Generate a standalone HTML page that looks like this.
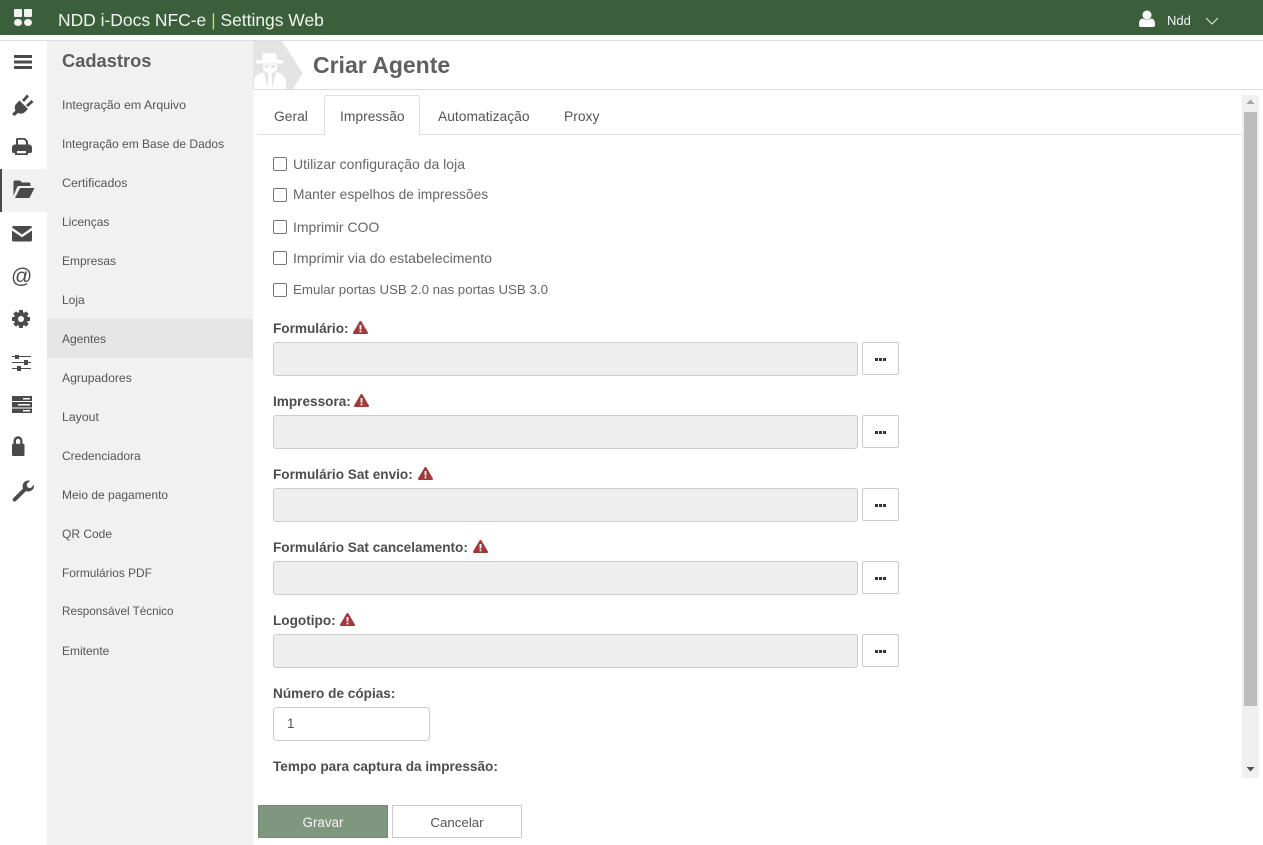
<!DOCTYPE html>
<html lang="pt">
<head>
<meta charset="utf-8">
<title>NDD i-Docs NFC-e | Settings Web</title>
<style>
html,body{margin:0;padding:0;width:1263px;height:845px;overflow:hidden;background:#fff;}
body{font-family:"Liberation Sans","DejaVu Sans",sans-serif;color:#555;position:relative;}
div,span,svg{position:absolute;box-sizing:border-box;}
.t{white-space:nowrap;}
.nav{left:62px;font-size:12px;color:#555;white-space:nowrap;line-height:16px;}
.chk{left:273px;width:14px;height:14px;border:1px solid #767676;border-radius:2px;background:#fff;}
.cl{left:293px;font-size:13.35px;color:#666;white-space:nowrap;line-height:18px;}
.lb{left:273px;font-size:13.6px;font-weight:bold;color:#4d4d4d;white-space:nowrap;line-height:18px;}
.in{left:273px;width:585px;height:34px;background:#eee;border:1px solid #ccc;border-radius:3px;}
.bt{left:862px;width:37px;height:33px;background:#fff;border:1px solid #ccc;border-radius:2px;}
.bt i{position:absolute;top:15px;width:3px;height:3px;background:#333;}
.tab{font-size:13.85px;color:#555;white-space:nowrap;line-height:18px;top:107px;}
.ic{fill:#4a4a4a;}
</style>
</head>
<body>
<div style="left:0;top:0;width:1263px;height:35px;background:#3b5f3b;"></div>
<svg style="left:14px;top:9px" width="18" height="18" viewBox="0 0 18 18" fill="#f2f2f2"><rect x="0" y="0" width="8" height="8" rx="1"/><rect x="10" y="0" width="8" height="8" rx="1"/><ellipse cx="4" cy="13.500" rx="4" ry="3.500"/><ellipse cx="14" cy="13.500" rx="4" ry="3.500"/></svg>
<div class="t" style="left:58px;top:9px;font-size:17.45px;line-height:22px;color:#f1f5f1;">NDD i-Docs NFC-e <span style="position:static;color:#e8c95a;">|</span> Settings Web</div>
<svg style="left:1139px;top:10px" width="16" height="18" viewBox="0 0 16 18" fill="#fff"><circle cx="8" cy="5" r="4.500"/><path d="M0 14c0-4 2-5.500 4-5.500 1 .8 2.500 1.200 4 1.200s3-.4 4-1.200c2 0 4 1.500 4 5.500v1.500c0 1-1 1.500-2 1.500H2c-1 0-2-.5-2-1.500z"/></svg>
<div class="t" style="left:1167px;top:13px;font-size:13px;line-height:16px;color:#f1f8f8;">Ndd</div>
<svg style="left:1205px;top:17px" width="14" height="9" viewBox="0 0 14 9" fill="none" stroke="#e6ece6" stroke-width="1"><path d="M1 1l6 6 6-6"/></svg>

<div style="left:0;top:40px;width:1263px;height:1px;background:#ddd;"></div>

<!-- left icon rail -->
<div style="left:0;top:169px;width:47px;height:43px;background:#f1f1f1;"></div>
<div style="left:0;top:169px;width:2px;height:43px;background:#4a4a4a;"></div>
<svg style="left:0;top:40px" width="47" height="480" viewBox="0 0 47 480">
<g class="ic">
<rect x="14" y="15" width="18" height="3" rx=".5"/><rect x="14" y="20.500" width="18" height="3" rx=".5"/><rect x="14" y="26" width="18" height="3" rx=".5"/>
<path d="M12 74l3.500-3.500c-1.500-3-.5-5.500 1-7l3-3 8.500 8.500-3 3c-1.500 1.500-4 2.300-7 1L14.500 76z"/><path d="M22 60l5-5.500 2 2-5 5.500zM26 65l5.500-5 2 2-5.500 5z"/>
<path d="M16 104.500V99.500c0-.8.500-1.500 1.500-1.500h7.500l3 3v3.500h1c1.500 0 3 1.200 3 3v4c0 .8-.5 1.500-1.500 1.500H28v2H15v-2h-1.500c-1 0-1.500-.7-1.500-1.500v-4c0-1.800 1.500-3 3-3zm2 0h8v-2.800l-2-1.900h-6zm-1 6.500v2.300h9V111z" fill-rule="evenodd"/>
<path d="M13.500 156V142c0-1 .5-1.500 1.500-1.500h5l2 2h7c1 0 1.500.5 1.500 1.500v2H19c-1 0-1.500.4-2 1.200z"/>
<path d="M15 158l4.500-9c.3-.6.8-1 1.500-1h13.500l-4.500 9c-.3.6-.8 1-1.500 1z"/>
<path d="M12 187.500c0-1 .8-1.500 1.500-1.500h17c.8 0 1.500.6 1.500 1.500l-10 7-10-7zM12 190.500l10 6.800 10-6.800V200c0 1-.7 1.500-1.500 1.500h-17c-.8 0-1.500-.5-1.500-1.500z"/>
</g>
<g fill="#4a4a4a" transform="translate(21 279)">
<circle r="7"/>
<rect x="-2" y="-9" width="4" height="18" rx=".6"/>
<rect x="-2" y="-9" width="4" height="18" rx=".6" transform="rotate(45)"/>
<rect x="-2" y="-9" width="4" height="18" rx=".6" transform="rotate(90)"/>
<rect x="-2" y="-9" width="4" height="18" rx=".6" transform="rotate(135)"/>
</g>
<circle cx="21" cy="279" r="3" fill="#fff"/>
<text x="11" y="243" font-family="Liberation Sans,sans-serif" font-size="21" fill="#4a4a4a">@</text>
<g fill="#4a4a4a">
<rect x="12" y="316" width="19" height="1"/><rect x="12" y="322" width="19" height="1"/><rect x="12" y="328" width="19" height="1"/>
<rect x="15" y="315" width="4" height="4"/><rect x="24" y="320" width="4" height="5"/><rect x="17" y="326" width="4" height="5"/>
<path d="M12 356h20v5H12zM12 362h20v5.500H12zM12 368.500h20v4.500H12z" />
</g>
<g fill="#fff"><rect x="23" y="358" width="7" height="1.500"/><rect x="18" y="364" width="12" height="1.500"/><rect x="23" y="370" width="7" height="1.500"/></g>
<g fill="#4a4a4a">
<path d="M12 405c0-.7.500-1.200 1.200-1.200h.3v-3a4.500 4.500 0 0 1 9 0v3h.8c.7 0 1.200.5 1.200 1.200v9.800c0 .7-.5 1.200-1.200 1.200H13.200c-.7 0-1.200-.5-1.200-1.200zm4-1.200h4.200v-3a2.100 2.100 0 0 0-4.200 0z" fill-rule="evenodd"/>
<path d="M13 458.500l10-10c-1-3 0-5.500 2-7 1.500-1 3.500-1.300 5-.8l-3.500 3.500 1 3 3 1 3.500-3.500c.3 2-.3 4-1.800 5.300-1.700 1.500-4 2-6.200 1l-10 10c-.8.800-2 .8-2.800 0-.7-.7-.7-1.800-.2-2.500z"/>
</g>
</svg>

<!-- submenu -->
<div style="left:47px;top:41px;width:206px;height:804px;background:#f1f1f1;"></div>
<div style="left:47px;top:319px;width:206px;height:39px;background:#e6e6e6;"></div>
<div class="t" style="left:62px;top:49px;font-size:18.3px;line-height:24px;font-weight:bold;color:#5c5c5c;">Cadastros</div>
<div class="nav" style="top:97px;font-size:12.4px">Integração em Arquivo</div>
<div class="nav" style="top:136px">Integração em Base de Dados</div>
<div class="nav" style="top:175px;font-size:12.4px">Certificados</div>
<div class="nav" style="top:214px">Licenças</div>
<div class="nav" style="top:253px">Empresas</div>
<div class="nav" style="top:292px">Loja</div>
<div class="nav" style="top:331px">Agentes</div>
<div class="nav" style="top:370px;font-size:12.2px">Agrupadores</div>
<div class="nav" style="top:409px;font-size:12.3px">Layout</div>
<div class="nav" style="top:448px">Credenciadora</div>
<div class="nav" style="top:487px">Meio de pagamento</div>
<div class="nav" style="top:526px">QR Code</div>
<div class="nav" style="top:565px;font-size:11.9px">Formulários PDF</div>
<div class="nav" style="top:604px;font-size:11.7px">Responsável Técnico</div>
<div class="nav" style="top:643px">Emitente</div>

<!-- page header -->
<svg style="left:253px;top:41px" width="52" height="48" viewBox="0 0 52 48">
<path d="M0 0H29L49.500 32 40 48H0z" fill="#e4e4e4"/>
<path d="M9 19l1-6c.2-1 1-1.500 2-1.200l4.500 1 4.500-1c1-.3 1.800.2 2 1.200l1 6h6v3.500H3V19z" fill="#fff"/>
<path d="M10 23.500h14V27c0 3-3 5-7 5s-7-2-7-5z" fill="#fff"/>
<path d="M11.500 24.500h4.500l-.5 2h-3zM18 24.500h4.500l-1 2h-3z" fill="#dcdcdc"/>
<path d="M1 48v-8c0-5 5-8 10-8.500l4 16.500zM33 48v-8c0-5-5-8-10-8.500L19 48zM15.500 32h3l.8 16h-4.600z" fill="#fff"/>
</svg>
<div class="t" style="left:313px;top:50px;font-size:23px;line-height:30px;font-weight:bold;color:#606060;">Criar Agente</div>
<div style="left:253px;top:89px;width:1010px;height:1px;background:#ddd;"></div>

<!-- tabs -->
<div style="left:258px;top:134px;width:984px;height:1px;background:#ddd;"></div>
<div style="left:324px;top:95px;width:96px;height:40px;background:#fff;border:1px solid #ddd;border-bottom:0;border-radius:3px 3px 0 0;"></div>
<div class="tab" style="left:274px">Geral</div>
<div class="tab" style="left:340px">Impressão</div>
<div class="tab" style="left:438px">Automatização</div>
<div class="tab" style="left:564px">Proxy</div>

<!-- checkboxes -->
<div class="chk" style="top:157px"></div><div class="cl" style="top:155px;font-size:14px">Utilizar configuração da loja</div>
<div class="chk" style="top:188px"></div><div class="cl" style="top:186px;font-size:13.77px">Manter espelhos de impressões</div>
<div class="chk" style="top:220px"></div><div class="cl" style="top:218px;font-size:14px">Imprimir COO</div>
<div class="chk" style="top:251px"></div><div class="cl" style="top:249px;font-size:14.1px">Imprimir via do estabelecimento</div>
<div class="chk" style="top:283px"></div><div class="cl" style="top:281px;font-size:13.3px">Emular portas USB 2.0 nas portas USB 3.0</div>

<!-- fields -->
<div class="lb" style="top:320px">Formulário:</div>
<svg style="left:353px;top:321px" width="15" height="13" viewBox="0 0 15 13"><path d="M7.500 0c.5 0 .9.300 1.100.7l6.200 10.600c.5.800 0 1.700-1 1.700H1.200c-1 0-1.500-.9-1-1.700L6.400.7C6.600.3 7 0 7.500 0z" fill="#a33a3a"/><rect x="6.600" y="4" width="1.800" height="4.500" fill="#fff"/><rect x="6.600" y="9.500" width="1.800" height="1.800" fill="#fff"/></svg>
<div class="in" style="top:342px"></div>
<div class="bt" style="top:342px"><i style="left:12px"></i><i style="left:16px"></i><i style="left:20px"></i></div>

<div class="lb" style="top:393px">Impressora:</div>
<svg style="left:354px;top:394px" width="15" height="13" viewBox="0 0 15 13"><path d="M7.500 0c.5 0 .9.300 1.100.7l6.200 10.600c.5.800 0 1.700-1 1.700H1.200c-1 0-1.500-.9-1-1.700L6.400.7C6.600.3 7 0 7.500 0z" fill="#a33a3a"/><rect x="6.600" y="4" width="1.800" height="4.500" fill="#fff"/><rect x="6.600" y="9.500" width="1.800" height="1.800" fill="#fff"/></svg>
<div class="in" style="top:415px"></div>
<div class="bt" style="top:415px"><i style="left:12px"></i><i style="left:16px"></i><i style="left:20px"></i></div>

<div class="lb" style="top:466px">Formulário Sat envio:</div>
<svg style="left:418px;top:467px" width="15" height="13" viewBox="0 0 15 13"><path d="M7.500 0c.5 0 .9.300 1.100.7l6.200 10.600c.5.800 0 1.700-1 1.700H1.200c-1 0-1.500-.9-1-1.700L6.400.7C6.600.3 7 0 7.500 0z" fill="#a33a3a"/><rect x="6.600" y="4" width="1.800" height="4.500" fill="#fff"/><rect x="6.600" y="9.500" width="1.800" height="1.800" fill="#fff"/></svg>
<div class="in" style="top:488px"></div>
<div class="bt" style="top:488px"><i style="left:12px"></i><i style="left:16px"></i><i style="left:20px"></i></div>

<div class="lb" style="top:539px">Formulário Sat cancelamento:</div>
<svg style="left:473px;top:540px" width="15" height="13" viewBox="0 0 15 13"><path d="M7.500 0c.5 0 .9.300 1.100.7l6.200 10.600c.5.800 0 1.700-1 1.700H1.200c-1 0-1.500-.9-1-1.700L6.400.7C6.600.3 7 0 7.500 0z" fill="#a33a3a"/><rect x="6.600" y="4" width="1.800" height="4.500" fill="#fff"/><rect x="6.600" y="9.500" width="1.800" height="1.800" fill="#fff"/></svg>
<div class="in" style="top:561px"></div>
<div class="bt" style="top:561px"><i style="left:12px"></i><i style="left:16px"></i><i style="left:20px"></i></div>

<div class="lb" style="top:612px">Logotipo:</div>
<svg style="left:340px;top:613px" width="15" height="13" viewBox="0 0 15 13"><path d="M7.500 0c.5 0 .9.300 1.100.7l6.200 10.600c.5.800 0 1.700-1 1.700H1.200c-1 0-1.500-.9-1-1.700L6.400.7C6.600.3 7 0 7.500 0z" fill="#a33a3a"/><rect x="6.600" y="4" width="1.800" height="4.500" fill="#fff"/><rect x="6.600" y="9.500" width="1.800" height="1.800" fill="#fff"/></svg>
<div class="in" style="top:634px"></div>
<div class="bt" style="top:634px"><i style="left:12px"></i><i style="left:16px"></i><i style="left:20px"></i></div>

<div class="lb" style="top:685px">Número de cópias:</div>
<div style="left:273px;top:707px;width:157px;height:34px;border:1px solid #ccc;border-radius:4px;background:#fff;"></div>
<div class="t" style="left:287px;top:715px;font-size:13.5px;line-height:18px;color:#555;">1</div>
<div class="lb" style="top:758px">Tempo para captura da impressão:</div>

<!-- scrollbar -->
<div style="left:1242px;top:95px;width:17px;height:683px;background:#f0f0f0;"></div>
<div style="left:1244px;top:112px;width:13px;height:594px;background:#bdbdbd;"></div>
<svg style="left:1246px;top:99px" width="9" height="6" viewBox="0 0 9 6"><path d="M4.500 0.500L8.500 5H.5z" fill="#a3a3a3"/></svg>
<svg style="left:1246px;top:766px" width="9" height="6" viewBox="0 0 9 6"><path d="M4.500 5.500L.5 1h8z" fill="#505050"/></svg>

<!-- footer buttons -->
<div style="left:258px;top:805px;width:130px;height:33px;background:#7f977f;border:1px solid #748c74;"></div>
<div class="t" style="left:258px;top:814px;width:130px;text-align:center;font-size:13.4px;line-height:18px;color:#f4f6f4;">Gravar</div>
<div style="left:392px;top:805px;width:130px;height:33px;background:#fff;border:1px solid #ccc;"></div>
<div class="t" style="left:392px;top:814px;width:130px;text-align:center;font-size:13.3px;line-height:18px;color:#555;">Cancelar</div>
</body>
</html>
